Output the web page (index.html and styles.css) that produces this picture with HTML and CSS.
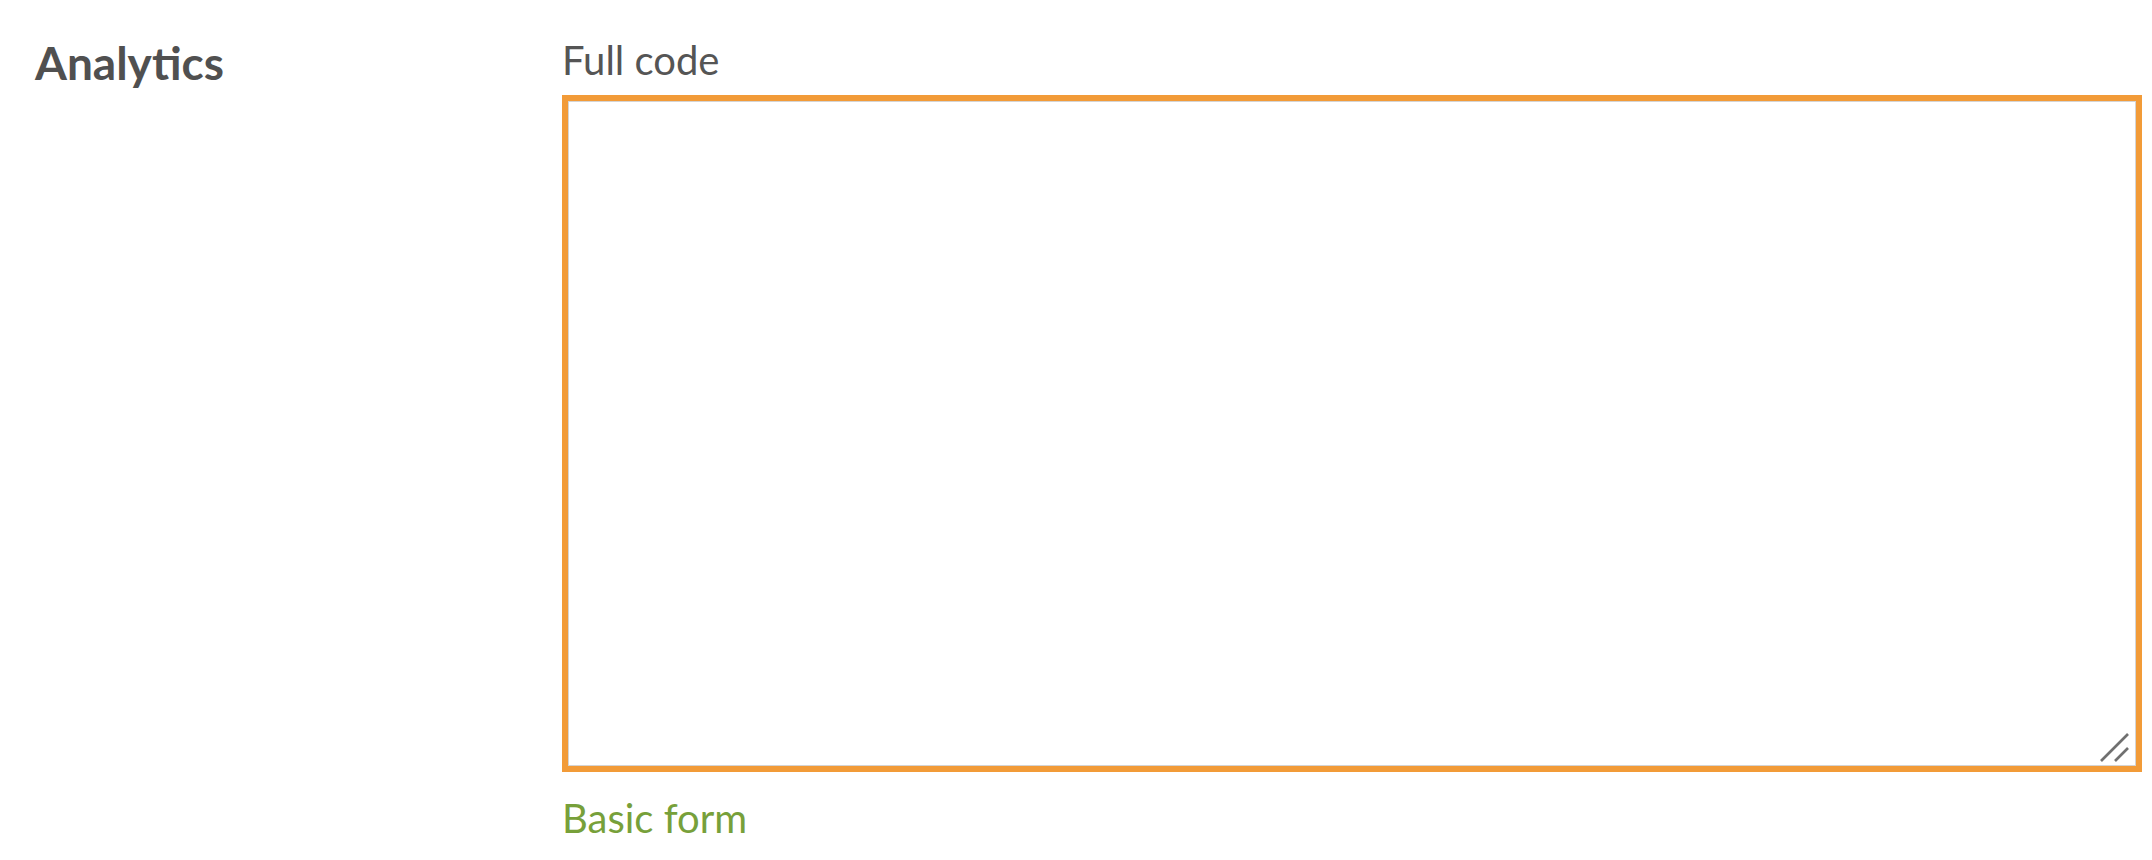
FILE: index.html
```html
<html>
<head>
<meta charset="utf-8">
<title>Analytics</title>
<link rel="stylesheet" href="styles.css">
</head>
<body>
<div class="row">
    <div class="row-label">Analytics</div>
    <div class="row-field">
        <label class="field-label" for="fullcode">Full code</label>
        <div class="code-box">
            <textarea id="fullcode" class="code-input"></textarea>
            <!-- resize grip -->
            <svg class="grip" width="30" height="30" viewBox="0 0 30 30">
                <line x1="1" y1="29" x2="28" y2="2" stroke="#707070" stroke-width="2.6"/>
                <line x1="15" y1="29" x2="28" y2="16" stroke="#707070" stroke-width="2.6"/>
            </svg>
        </div>
        <a class="field-link" href="javascript:;">Basic form</a>
    </div>
</div>
</body>
</html>
```

FILE: styles.css
```css
body,div,p{margin:0;padding:0;}
body{margin:0;color:#555;font-family:Lato,"Open Sans",sans-serif;background:#fff;}
.row{display:flex;padding:35px 10px 0 35px;}
.row-label{width:527px;flex:none;font-size:46px;font-weight:bold;line-height:55px;color:#505050;}
.row-field{flex:1;display:flex;flex-direction:column;}
.field-label{display:block;margin-top:1px;font-size:40px;line-height:48px;color:#555;}
.code-box{position:relative;margin-top:11px;height:677px;}
.code-input{display:block;box-sizing:border-box;width:100%;height:100%;margin:0;padding:8px;border:6px solid #f29b38;box-shadow:inset 0 0 0 1px #d4d4d4;background:#fff;resize:none;outline:none;font:16px "Liberation Mono",monospace;}
.grip{position:absolute;right:12px;bottom:10px;pointer-events:none;}
.field-link{display:block;margin-top:22px;font-size:40px;line-height:48px;color:#77a03a;text-decoration:none;}
```
